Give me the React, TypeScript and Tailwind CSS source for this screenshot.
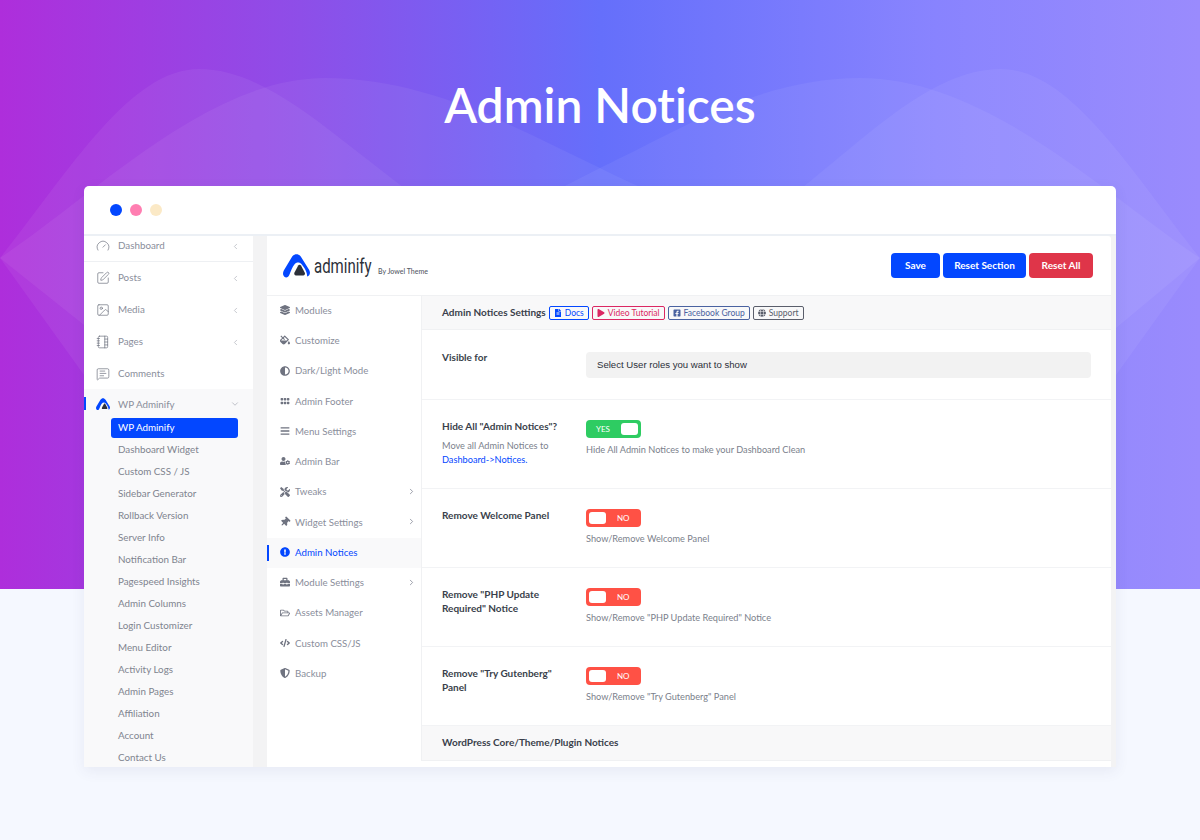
import type { ReactNode } from "react";
import {
  ChevronDown,
  ChevronLeft,
  ChevronRight,
  Gauge,
  Image,
  MessageSquareText,
  NotebookTabs,
  SquarePen,
} from "lucide-react";
import {
  FaAdjust,
  FaBars,
  FaCode,
  FaExclamationCircle,
  FaFacebookSquare,
  FaFileAlt,
  FaFillDrip,
  FaGlobe,
  FaGripHorizontal,
  FaLayerGroup,
  FaPlay,
  FaRegFolderOpen,
  FaShieldAlt,
  FaThumbtack,
  FaToolbox,
  FaTools,
  FaUserCog,
} from "react-icons/fa";

const wpMenu = [
  { label: "Dashboard", icon: <Gauge size={14} strokeWidth={1.2} />, h: "-mt-[5px] h-[31px] border-b border-[#eef0f3]" },
  { label: "Posts", icon: <SquarePen size={14} strokeWidth={1.2} />, h: "h-[32px]" },
  { label: "Media", icon: <Image size={14} strokeWidth={1.2} />, h: "h-[32px]" },
  { label: "Pages", icon: <NotebookTabs size={14} strokeWidth={1.2} />, h: "h-[32px]" },
  { label: "Comments", icon: <MessageSquareText size={14} strokeWidth={1.2} />, h: "h-[31px]", noArrow: true },
];

const subMenu = [
  "Dashboard Widget",
  "Custom CSS / JS",
  "Sidebar Generator",
  "Rollback Version",
  "Server Info",
  "Notification Bar",
  "Pagespeed Insights",
  "Admin Columns",
  "Login Customizer",
  "Menu Editor",
  "Activity Logs",
  "Admin Pages",
  "Affiliation",
  "Account",
  "Contact Us",
];

const optionsMenu = [
  { label: "Modules", icon: <FaLayerGroup /> },
  { label: "Customize", icon: <FaFillDrip /> },
  { label: "Dark/Light Mode", icon: <FaAdjust /> },
  { label: "Admin Footer", icon: <FaGripHorizontal /> },
  { label: "Menu Settings", icon: <FaBars /> },
  { label: "Admin Bar", icon: <FaUserCog /> },
  { label: "Tweaks", icon: <FaTools />, arrow: true },
  { label: "Widget Settings", icon: <FaThumbtack className="rotate-45" />, arrow: true },
  { label: "Admin Notices", icon: <FaExclamationCircle />, active: true },
  { label: "Module Settings", icon: <FaToolbox />, arrow: true },
  { label: "Assets Manager", icon: <FaRegFolderOpen /> },
  { label: "Custom CSS/JS", icon: <FaCode /> },
  { label: "Backup", icon: <FaShieldAlt /> },
];

function Logo({ size }: { size: number }) {
  return (
    <svg width={size} height={(size * 24) / 27} viewBox="0 0 27 24" className="shrink-0">
      <path
        d="M0.8 16.5 L8.6 3.4 C11 -0.8 16 -0.8 18.4 3.4 L26.2 16 C27.8 18.8 26.8 22 24 22.4 C24.6 18.5 21.5 13.8 18.8 10.4 C16.6 7.8 13.4 7.8 11.4 10.4 C9.4 13 8 16.5 6.5 20.5 C5.5 23.5 3 24 1.4 22.8 C-0.2 21.5 -0.4 18.8 0.8 16.5 Z"
        fill="#0347FF"
      />
      <path
        d="M15.2 11.6 C16 10.6 17.2 10.6 18 11.6 L21.8 18.8 C22.4 20.2 21.6 21.4 20.2 21.4 L13 21.4 C11.6 21.4 10.8 20.2 11.4 18.8 Z"
        fill="#2C3039"
      />
    </svg>
  );
}

function Tag({ color, icon, children }: { color: string; icon: ReactNode; children: ReactNode }) {
  return (
    <span className={`mt-[1px] flex h-[14px] items-center gap-[3px] rounded-[2px] border px-[4px] text-[8.5px] leading-none font-normal ${color}`}>
      <span className="text-[8px]">{icon}</span>
      {children}
    </span>
  );
}

function NoSwitch() {
  return (
    <div className="flex h-[18px] w-[55px] items-center rounded-[4px] bg-[#FF5145] pl-[3px] text-white">
      <span className="h-[12px] w-[17px] rounded-[3px] bg-white" />
      <span className="ml-[11px] text-[8px] leading-none">NO</span>
    </div>
  );
}

function Row({ label, help, children, h }: { label: ReactNode; help?: ReactNode; children: ReactNode; h: string }) {
  return (
    <div className={`flex border-b border-[#f2f3f5] pl-[20px] ${h}`}>
      <div className="w-[144px] shrink-0 pt-[19px]">
        <div className="w-[130px] text-[10px] leading-[14px] font-bold text-[#3a3f4b]">{label}</div>
        {help}
      </div>
      <div className="min-w-0 flex-1 pt-[20px] pr-[20px]">{children}</div>
    </div>
  );
}

function Help({ children }: { children: ReactNode }) {
  return <p className="mt-[5px] text-[9.2px] leading-[14px] text-[#7b7f8c]">{children}</p>;
}

function Waves() {
  return (
    <svg viewBox="0 0 1200 589" className="absolute inset-0 h-full w-full">
      <g fill="#ffffff" fillOpacity="0.055">
        <path d="M0 258 C70 170 130 69 199 69 C275 69 345 150 440 213 L440 420 L84 325 Z" />
        <path d="M0 258 C100 190 210 78 325 78 C430 78 520 130 600 168 C640 188 670 200 703 213 L703 420 L84 375 Z" />
        <path d="M1200 258 C1130 170 1070 69 1001 69 C925 69 855 150 770 213 L770 420 L1116 328 Z" />
        <path d="M1200 258 C1100 190 985 78 860 78 C760 78 680 130 600 168 C560 188 540 200 510 213 L510 420 L1116 375 Z" />
      </g>
      <g fill="#ffffff" fillOpacity="0.012">
        <rect x="870" y="0" width="60" height="589" />
        <rect x="960" y="0" width="40" height="589" />
        <rect x="1090" y="0" width="60" height="589" />
      </g>
    </svg>
  );
}

export default function App() {
  return (
    <div
      className="relative h-[840px] w-[1200px] overflow-hidden bg-[#F5F8FF] text-[#6b7080]"
      style={{ fontFamily: 'Lato, "Noto Sans", sans-serif' }}
    >
      <div className="absolute inset-x-0 top-0 h-[589px] bg-[linear-gradient(90deg,#AE2EDB_0%,#8E4EE8_25%,#656FFB_50%,#8883FE_78%,#9A8BFD_100%)]">
        <Waves />
      </div>

      <div className="relative flex flex-col items-center">
        <h1 className="mt-[74px] h-[112px] text-[48px] leading-[62px] font-semibold text-white [font-variant-ligatures:none]">
          Admin Notices
        </h1>

        {/* browser frame */}
        <div className="h-[581px] w-[1032px] overflow-hidden rounded-t-[5px] bg-white shadow-[0_4px_14px_rgba(60,70,120,0.08)]">
          <div className="flex h-[50px] items-center gap-[8px] border-b-2 border-[#ecf0f5] pl-[26px]">
            <span className="h-[12px] w-[12px] rounded-full bg-[#0347FF]" />
            <span className="h-[12px] w-[12px] rounded-full bg-[#FF7EB1]" />
            <span className="h-[12px] w-[12px] rounded-full bg-[#FBE9C6]" />
          </div>

          <div className="flex h-[531px] bg-[#f3f3f4]">
            {/* wp sidebar */}
            <aside className="w-[169px] shrink-0 bg-white text-[9.8px]">
              {wpMenu.map((item) => (
                <div key={item.label} className={`flex items-center pr-[13px] pl-[12px] text-[#8a8e9b] ${item.h}`}>
                  <span className="w-[22px] text-[#6f7380]">{item.icon}</span>
                  <span className="flex-1 pb-[1px]">{item.label}</span>
                  {!item.noArrow && <ChevronLeft size={9} className="text-[#b4b7bf]" />}
                </div>
              ))}
              <div className="relative h-[400px] bg-[#f9f9fa]">
                <span className="absolute top-[8px] left-0 h-[13px] w-[1.5px] bg-[#0347FF]" />
                <div className="flex h-[29px] items-center pt-[1px] pr-[13px] pl-[12px] text-[#8a8e9b]">
                  <span className="w-[22px]">
                    <Logo size={14} />
                  </span>
                  <span className="flex-1">WP Adminify</span>
                  <ChevronDown size={10} className="text-[#b4b7bf]" />
                </div>
                <div className="mr-[15px] ml-[27px] flex h-[20px] items-center rounded-[3px] bg-[#0347FF] pb-[1px] pl-[7px] text-white">
                  WP Adminify
                </div>
                <div className="mt-[1px] pl-[34px] text-[#80848f]">
                  {subMenu.map((s) => (
                    <div key={s} className="flex h-[22px] items-center pb-[1px]">
                      {s}
                    </div>
                  ))}
                </div>
              </div>
            </aside>

            {/* options panel */}
            <main className="ml-[14px] w-[844px] shrink-0 rounded-tr-[3px] bg-white">
              <header className="flex h-[60px] items-center justify-between border-b border-[#f0f1f3] pr-[18px] pl-[16px]">
                <div className="flex items-end">
                  <Logo size={27} />
                  <span
                    className="ml-[4px] w-[57px] origin-left scale-x-[0.75] text-[20px] leading-[24px] whitespace-nowrap text-[#2c3039]"
                    style={{ fontFamily: "Roboto, sans-serif" }}
                  >
                    adminify
                  </span>
                  <span className="ml-[7px] pb-[1px] text-[7px] font-medium text-[#555a66]">By Jowel Theme</span>
                </div>
                <div className="flex gap-[3px] text-[10px] font-bold text-white">
                  <span className="flex h-[25px] w-[49px] items-center justify-center rounded-[4px] bg-[#0347FF]">Save</span>
                  <span className="flex h-[25px] w-[83px] items-center justify-center rounded-[4px] bg-[#0347FF]">Reset Section</span>
                  <span className="flex h-[25px] w-[64px] items-center justify-center rounded-[4px] bg-[#DF3549]">Reset All</span>
                </div>
              </header>

              <div className="flex">
                <nav className="w-[155px] shrink-0 border-r border-[#f0f1f3] pb-[60px] text-[9.7px]">
                  {optionsMenu.map((item) => (
                    <div
                      key={item.label}
                      className={`relative flex h-[30.25px] items-center pr-[5px] pb-[2px] pl-[13px] ${item.active ? "bg-[#f9f9fa] text-[#0347FF]" : "text-[#8a8e9b]"}`}
                    >
                      {item.active && <span className="absolute top-[7px] left-0 h-[16px] w-[1.5px] bg-[#0347FF]" />}
                      <span className={`w-[15px] text-[10px] ${item.active ? "" : "text-[#6f7380]"}`}>{item.icon}</span>
                      <span className="flex-1">{item.label}</span>
                      {item.arrow && <ChevronRight size={9} className="text-[#7f8390]" />}
                    </div>
                  ))}
                </nav>

                <section className="min-w-0 flex-1">
                  <div className="flex h-[34px] items-center gap-[3px] border-b border-[#f0f1f3] bg-[#f8f8f9] pl-[20px] text-[10px] font-bold text-[#3a3f4b]">
                    <span>Admin Notices Settings</span>
                    <Tag color="border-[#0347FF] text-[#0347FF]" icon={<FaFileAlt />}>Docs</Tag>
                    <Tag color="border-[#DB2763] text-[#DB2763]" icon={<FaPlay />}>Video Tutorial</Tag>
                    <Tag color="border-[#4a62a0] text-[#4a62a0]" icon={<FaFacebookSquare />}>Facebook Group</Tag>
                    <Tag color="border-[#5a5e6b] text-[#5a5e6b]" icon={<FaGlobe />}>Support</Tag>
                  </div>

                  <Row label={<div className="pt-[1px]">Visible for</div>} h="h-[70px]">
                    <div
                      className="mt-[2px] flex h-[26px] items-center rounded-[4px] bg-[#f2f2f2] pl-[11px] text-[9.6px] text-[#2c3039]"
                      style={{ fontFamily: '"Liberation Sans", sans-serif' }}
                    >
                      Select User roles you want to show
                    </div>
                  </Row>

                  <Row
                    h="h-[89px]"
                    label={'Hide All "Admin Notices"?'}
                    help={
                      <div className="pt-[1px]">
                        <Help>
                          Move all Admin Notices to
                          <br />
                          <span className="text-[#0347FF]">Dashboard-&gt;Notices.</span>
                        </Help>
                      </div>
                    }
                  >
                    <div className="flex h-[18px] w-[55px] items-center justify-between rounded-[4px] bg-[#2ECC62] pr-[3px] pl-[10px] text-white">
                      <span className="text-[8px] leading-none">YES</span>
                      <span className="h-[12px] w-[17px] rounded-[3px] bg-white" />
                    </div>
                    <Help>Hide All Admin Notices to make your Dashboard Clean</Help>
                  </Row>

                  <Row h="h-[79px]" label="Remove Welcome Panel">
                    <NoSwitch />
                    <Help>Show/Remove Welcome Panel</Help>
                  </Row>

                  <Row h="h-[79px]" label={'Remove "PHP Update Required" Notice'}>
                    <NoSwitch />
                    <Help>Show/Remove "PHP Update Required" Notice</Help>
                  </Row>

                  <Row h="h-[79px]" label={'Remove "Try Gutenberg" Panel'}>
                    <NoSwitch />
                    <Help>Show/Remove "Try Gutenberg" Panel</Help>
                  </Row>

                  <div className="flex h-[35px] items-center border-b border-[#f0f1f3] bg-[#f8f8f9] pb-[2px] pl-[20px] text-[10px] font-bold text-[#3a3f4b]">
                    WordPress Core/Theme/Plugin Notices
                  </div>
                </section>
              </div>
            </main>
          </div>
        </div>
      </div>
    </div>
  );
}
